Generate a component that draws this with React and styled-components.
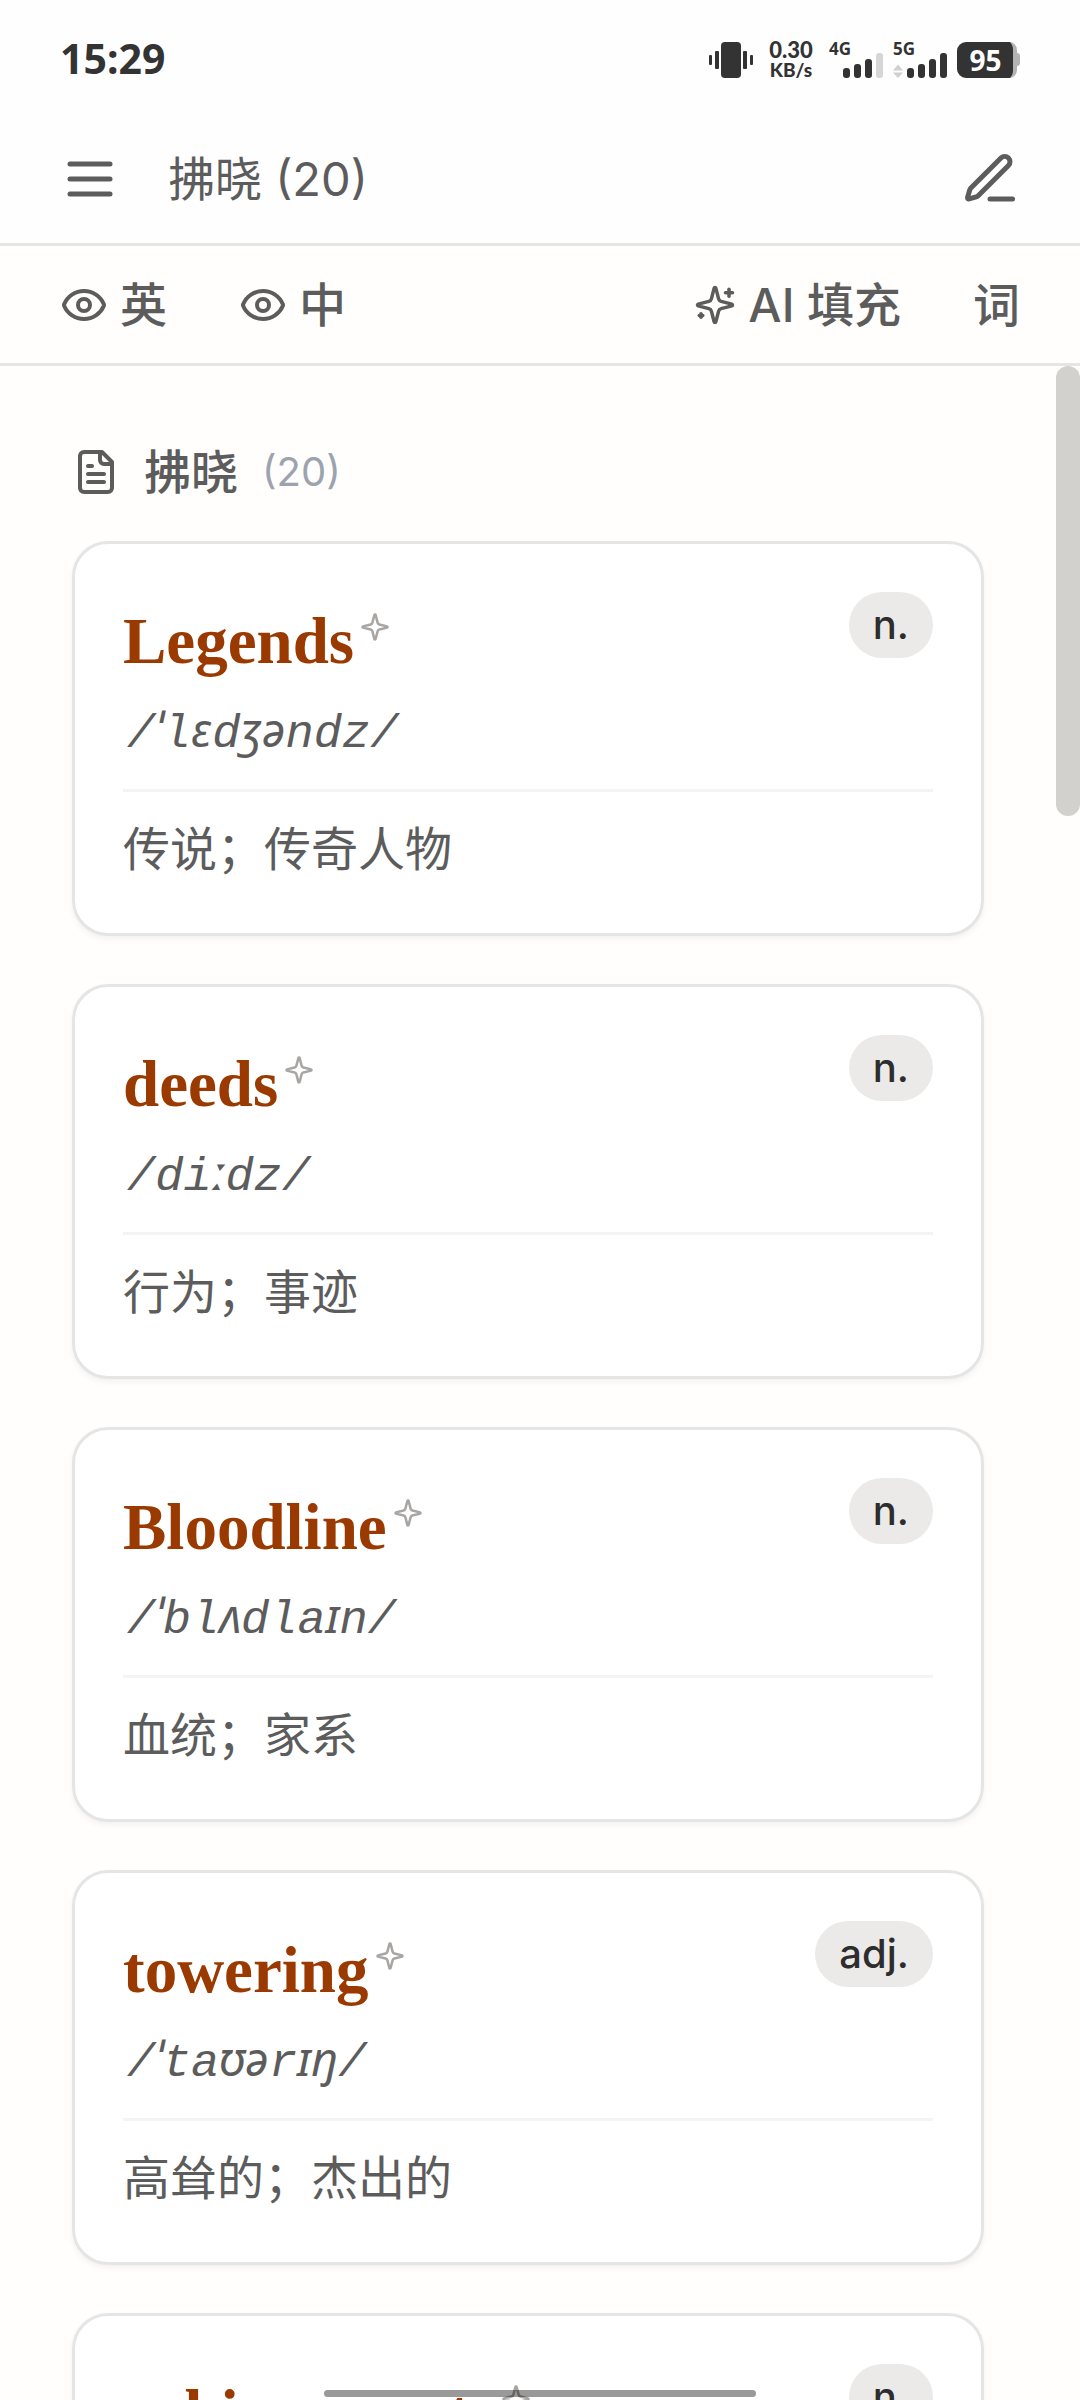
import React from 'react';
import styled, { createGlobalStyle } from 'styled-components';

const GlobalStyle = createGlobalStyle`
  * {
    box-sizing: border-box;
  }

  body {
    margin: 0;
    background-color: #fffefc;
    color: #5c5c5c;
    font-family: Inter, 'Noto Sans CJK SC', sans-serif;
    font-size: 47px;
  }

  button {
    padding: 0;
    border: none;
    background: none;
    color: inherit;
    font: inherit;
    cursor: pointer;
  }
`;

const Page = styled.div`
  position: relative;
  display: flex;
  flex-direction: column;
  height: 100vh;
  overflow: hidden;
`;

const StatusBar = styled.div`
  display: flex;
  align-items: center;
  justify-content: space-between;
  flex-shrink: 0;
  height: 114px;
  padding: 6px 60px 0;
  background-color: #fefefe;
  color: #333333;
  font-family: 'Noto Sans', sans-serif;
  font-weight: 700;
`;

const Clock = styled.span`
  padding-bottom: 4px;
  font-size: 41px;
`;

const StatusIcons = styled.div`
  display: flex;
  align-items: center;
  height: 36px;
  gap: 10px;
`;

const NetSpeed = styled.div`
  display: flex;
  flex-direction: column;
  align-items: center;
  width: 56px;
  font-family: Lato, sans-serif;
  font-size: 22px;
  font-weight: 900;
  line-height: 20px;

  small {
    font-size: 19px;
  }
`;

const Signal = styled.div`
  display: grid;
  width: 54px;
  height: 36px;

  > * {
    grid-area: 1 / 1;
  }

  svg {
    align-self: end;
    justify-self: end;
  }
`;

const SignalLabel = styled.span`
  font-size: 17px;
  line-height: 14px;
`;

const Battery = styled.div`
  display: grid;
  place-items: center start;
  width: 63px;
  height: 36px;

  > * {
    grid-area: 1 / 1;
  }
`;

const BatteryLevel = styled.span`
  width: 57px;
  color: #ffffff;
  font-size: 28px;
  line-height: 36px;
  text-align: center;
`;

const Header = styled.header`
  display: flex;
  align-items: center;
  flex-shrink: 0;
  gap: 48px;
  height: 132px;
  padding: 0 60px;
  background-color: #fefefe;
  border-bottom: 3px solid #e5e5e3;
`;

const Title = styled.h1`
  flex: 1;
  margin: 0;
  font-size: 47px;
  font-weight: 400;
  line-height: 69px;
`;

const IconButton = styled.button`
  display: flex;
`;

const Toolbar = styled.nav`
  display: flex;
  align-items: center;
  justify-content: space-between;
  flex-shrink: 0;
  height: 120px;
  padding: 0 60px;
  border-bottom: 3px solid #e5e5e3;
`;

const ToolGroup = styled.div`
  display: flex;
  gap: 72px;
`;

const ToolButton = styled.button`
  display: flex;
  align-items: center;
  gap: 12px;
  font-weight: 500;
  line-height: 69px;
`;

const Content = styled.div`
  display: flex;
  flex: 1;
  min-height: 0;
`;

const Main = styled.main`
  flex: 1;
  min-width: 0;
  padding: 71px 72px 0;
  overflow: hidden;
`;

const ScrollTrack = styled.div`
  width: 24px;
`;

const ScrollThumb = styled.div`
  height: 450px;
  border-radius: 12px;
  background-color: #d2d1ce;
`;

const SectionHeader = styled.div`
  display: flex;
  align-items: center;
  gap: 24px;
  margin-bottom: 35px;
`;

const SectionTitle = styled.h2`
  margin: 0;
  font-size: 47px;
  font-weight: 500;
  line-height: 69px;
`;

const Count = styled.span`
  color: #9ca3af;
  font-size: 40px;
`;

const WordList = styled.ul`
  display: flex;
  flex-direction: column;
  gap: 48px;
  margin: 0;
  padding: 0;
  list-style: none;
`;

const Card = styled.li`
  padding: 48px;
  border: 3px solid #e5e5e5;
  border-radius: 36px;
  background-color: #ffffff;
  box-shadow: 0 3px 6px rgba(0, 0, 0, 0.05);
`;

const CardTop = styled.div`
  display: flex;
  align-items: flex-start;
  justify-content: space-between;
  padding-bottom: 20px;
  border-bottom: 3px solid #f4f4f4;
`;

const WordRow = styled.div`
  display: flex;
  align-items: flex-start;
  gap: 6px;
`;

const Word = styled.h3`
  margin: 0;
  color: #9a3a00;
  font-family: 'Liberation Serif', serif;
  font-size: 65px;
  font-weight: 700;
  line-height: 98px;
`;

const SparkButton = styled(IconButton)`
  margin-top: 20px;
  color: #a8a5a2;
`;

const Phonetic = styled.p`
  margin: 10px 0 0;
  padding-left: 4px;
  font-family: 'Liberation Mono', monospace;
  font-size: 47px;
  font-style: italic;
  line-height: 69px;
`;

const IpaSymbol = styled.span`
  font-family: 'Noto Sans', sans-serif;
  line-height: 1;
`;

const Pos = styled.span`
  padding: 9px 24px;
  border-radius: 33px;
  background-color: #ebeae9;
  color: #2d2d2d;
  font-size: 40px;
  font-weight: 500;
  line-height: 48px;
`;

const Meaning = styled.p`
  margin: 0;
  padding: 22px 0 2px;
  line-height: 69px;
`;

const HomeIndicator = styled.div`
  position: absolute;
  bottom: 3px;
  left: 30%;
  width: 40%;
  height: 7px;
  border-radius: 4px;
  background-color: rgba(0, 0, 0, 0.4);
`;

const STAR_PATH =
  'M9.937 15.5A2 2 0 0 0 8.5 14.063l-6.135-1.582a.5.5 0 0 1 0-.962L8.5 9.936A2 2 0 0 0 9.937 8.5l1.582-6.135a.5.5 0 0 1 .963 0L14.063 8.5A2 2 0 0 0 15.5 9.937l6.135 1.581a.5.5 0 0 1 0 .964L15.5 14.063a2 2 0 0 0-1.437 1.437l-1.582 6.135a.5.5 0 0 1-.963 0z';

const ICONS = {
  menu: ['M4 6h16', 'M4 12h16', 'M4 18h16'],
  edit: [
    'M12 20h9',
    'M16.376 3.622a1 1 0 0 1 3.002 3.002L7.368 18.635a2 2 0 0 1-.855.506l-2.872.838a.5.5 0 0 1-.62-.62l.838-2.872a2 2 0 0 1 .506-.854z',
  ],
  eye: [
    'M2.062 12.348a1 1 0 0 1 0-.696 10.75 10.75 0 0 1 19.876 0 1 1 0 0 1 0 .696 10.75 10.75 0 0 1-19.876 0',
    'M15 12a3 3 0 1 1-6 0 3 3 0 0 1 6 0',
  ],
  star: [STAR_PATH],
  sparkles: [STAR_PATH, 'M20 3v4', 'M22 5h-4', 'M4 17v2', 'M5 18H3'],
  file: [
    'M15 2H6a2 2 0 0 0-2 2v16a2 2 0 0 0 2 2h12a2 2 0 0 0 2-2V7Z',
    'M14 2v4a2 2 0 0 0 2 2h4',
    'M10 9H8',
    'M16 13H8',
    'M16 17H8',
  ],
};

function Icon({ name, size }) {
  return (
    <svg
      width={size}
      height={size}
      viewBox="0 0 24 24"
      fill="none"
      stroke="currentColor"
      strokeWidth="2"
      strokeLinecap="round"
      strokeLinejoin="round"
      aria-hidden="true"
    >
      {ICONS[name].map((d) => (
        <path key={d} d={d} />
      ))}
    </svg>
  );
}

function VibrateIcon() {
  return (
    <svg width="44" height="36" viewBox="0 0 44 36" fill="currentColor" aria-hidden="true">
      <rect x="12" y="0" width="20" height="36" rx="4" />
      <rect x="6" y="9" width="4" height="18" rx="1" />
      <rect x="34" y="9" width="4" height="18" rx="1" />
      <rect x="0" y="13" width="3" height="10" rx="1" />
      <rect x="41" y="13" width="3" height="10" rx="1" />
    </svg>
  );
}

function SignalBars({ level, arrows }) {
  return (
    <svg width="54" height="25" viewBox="0 0 54 25" fill="currentColor" aria-hidden="true">
      {arrows && <path d="M0 17.500 5 11.500l5 6zM0 19.500h10l-5 5.500z" fill="#d0d0d0" />}
      {[10, 14, 19, 25].map((h, i) => (
        <rect
          key={h}
          x={14 + i * 11}
          y={25 - h}
          width="7"
          height={h}
          rx="3"
          fill={i < level ? 'currentColor' : '#d6d6d6'}
        />
      ))}
    </svg>
  );
}

function BatteryIcon() {
  return (
    <svg width="63" height="36" viewBox="0 0 63 36" aria-hidden="true">
      <path d="M50 0h2a8 8 0 0 1 8 8v20a8 8 0 0 1-8 8h-2zM60 11a3 3 0 0 1 3 3v7a3 3 0 0 1-3 3z" fill="#b3b3b3" />
      <path d="M9 0h44c2 2 3 5 3 8v20c0 3-1 6-3 8H9a9 9 0 0 1-9-9V9a9 9 0 0 1 9-9z" fill="#333333" />
    </svg>
  );
}

const words = [
  { word: 'Legends', phonetic: '/ˈlɛdʒəndz/', pos: 'n.', meaning: '传说；传奇人物' },
  { word: 'deeds', phonetic: '/diːdz/', pos: 'n.', meaning: '行为；事迹' },
  { word: 'Bloodline', phonetic: '/ˈblʌdlaɪn/', pos: 'n.', meaning: '血统；家系' },
  { word: 'towering', phonetic: '/ˈtaʊərɪŋ/', pos: 'adj.', meaning: '高耸的；杰出的' },
  { word: 'achievements', phonetic: '/əˈtʃiːvmənts/', pos: 'n.', meaning: '成就；成绩' },
];

// IPA symbols are set in a proportional face, plain letters stay monospaced
const splitPhonetic = (text) => text.split(/([^\x00-\x7f]+)/).filter(Boolean);

function WordCard({ word, phonetic, pos, meaning }) {
  return (
    <Card>
      <CardTop>
        <div>
          <WordRow>
            <Word>{word}</Word>
            <SparkButton type="button" aria-label={`AI ${word}`}>
              <Icon name="star" size={30} />
            </SparkButton>
          </WordRow>
          <Phonetic>
            {splitPhonetic(phonetic).map((part, i) =>
              part.charCodeAt(0) > 127 ? <IpaSymbol key={i}>{part}</IpaSymbol> : part
            )}
          </Phonetic>
        </div>
        <Pos>{pos}</Pos>
      </CardTop>
      <Meaning>{meaning}</Meaning>
    </Card>
  );
}

function App() {
  return (
    <Page>
      <GlobalStyle />
      <StatusBar>
        <Clock>15:29</Clock>
        <StatusIcons>
          <VibrateIcon />
          <NetSpeed>
            <span>0.30</span>
            <small>KB/s</small>
          </NetSpeed>
          <Signal>
            <SignalLabel>4G</SignalLabel>
            <SignalBars level={3} />
          </Signal>
          <Signal>
            <SignalLabel>5G</SignalLabel>
            <SignalBars level={4} arrows />
          </Signal>
          <Battery>
            <BatteryIcon />
            <BatteryLevel>95</BatteryLevel>
          </Battery>
        </StatusIcons>
      </StatusBar>

      <Header>
        <IconButton type="button" aria-label="菜单">
          <Icon name="menu" size={60} />
        </IconButton>
        <Title>拂晓 (20)</Title>
        <IconButton type="button" aria-label="编辑">
          <Icon name="edit" size={60} />
        </IconButton>
      </Header>

      <Toolbar>
        <ToolGroup>
          <ToolButton type="button">
            <Icon name="eye" size={48} />英
          </ToolButton>
          <ToolButton type="button">
            <Icon name="eye" size={48} />中
          </ToolButton>
        </ToolGroup>
        <ToolGroup>
          <ToolButton type="button">
            <Icon name="sparkles" size={42} />
            AI 填充
          </ToolButton>
          <ToolButton type="button">词</ToolButton>
        </ToolGroup>
      </Toolbar>

      <Content>
        <Main>
          <SectionHeader>
            <Icon name="file" size={48} />
            <SectionTitle>拂晓</SectionTitle>
            <Count>(20)</Count>
          </SectionHeader>
          <WordList>
            {words.map((item) => (
              <WordCard key={item.word} {...item} />
            ))}
          </WordList>
        </Main>
        <ScrollTrack>
          <ScrollThumb />
        </ScrollTrack>
      </Content>
      <HomeIndicator />
    </Page>
  );
}

export default App;
